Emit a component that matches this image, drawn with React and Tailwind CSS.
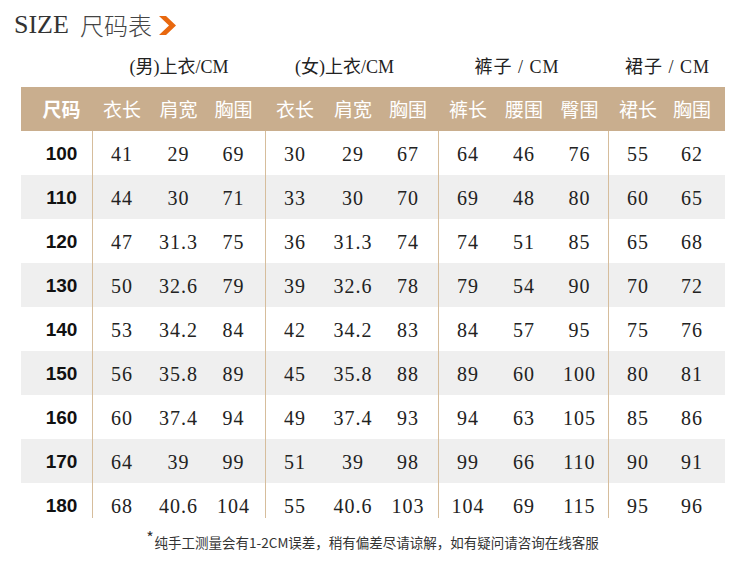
import React from 'react'

// column layout: [group, widths, extra class per cell]
const groups = [
  { cols: [{ w: 'w-[58px]' }, { w: 'w-[55px]' }, { w: 'w-[59px] pr-[4px]' }] },
  { cols: [{ w: 'w-[58px]' }, { w: 'w-[58px]' }, { w: 'w-[56px] pr-[4px]' }] },
  { cols: [{ w: 'w-[58px]' }, { w: 'w-[54px]' }, { w: 'w-[57px]' }] },
  { cols: [{ w: 'w-[58px]' }, { w: 'w-[50px]' }] },
]

const headers = [
  ['衣长', '肩宽', '胸围'],
  ['衣长', '肩宽', '胸围'],
  ['裤长', '腰围', '臀围'],
  ['裙长', '胸围'],
]

const rows = [
  ['100', ['41', '29', '69'], ['30', '29', '67'], ['64', '46', '76'], ['55', '62']],
  ['110', ['44', '30', '71'], ['33', '30', '70'], ['69', '48', '80'], ['60', '65']],
  ['120', ['47', '31.3', '75'], ['36', '31.3', '74'], ['74', '51', '85'], ['65', '68']],
  ['130', ['50', '32.6', '79'], ['39', '32.6', '78'], ['79', '54', '90'], ['70', '72']],
  ['140', ['53', '34.2', '84'], ['42', '34.2', '83'], ['84', '57', '95'], ['75', '76']],
  ['150', ['56', '35.8', '89'], ['45', '35.8', '88'], ['89', '60', '100'], ['80', '81']],
  ['160', ['60', '37.4', '94'], ['49', '37.4', '93'], ['94', '63', '105'], ['85', '86']],
  ['170', ['64', '39', '99'], ['51', '39', '98'], ['99', '66', '110'], ['90', '91']],
  ['180', ['68', '40.6', '104'], ['55', '40.6', '103'], ['104', '69', '115'], ['95', '96']],
]

const serif = "font-['Liberation_Serif','Noto_Sans_CJK_SC',serif]"
const cjk = "font-['Noto_Sans_CJK_SC','Liberation_Sans',sans-serif]"

function Chevron() {
  return (
    <svg width="19" height="19" viewBox="0 0 19 19" className="ml-[6px] mt-[1px]">
      <polygon points="1,0 8,0 18,9.5 8,19 1,19 11,9.5" fill="#e8680f" />
    </svg>
  )
}

export default function App() {
  return (
    <div className="w-[750px] h-[561px] bg-white overflow-hidden">
      {/* title */}
      <div className="h-[48px] flex items-center pl-[14px] pt-[1px]">
        <span className={`${serif} text-[26px] text-[#333] leading-none`}>SIZE</span>
        <span className={`${cjk} text-[24px] text-[#444] leading-none ml-[11px] font-light`}>尺码表</span>
        <Chevron />
      </div>

      {/* group labels */}
      <div className={`${serif} h-[39px] flex items-center pl-[93px] text-[18px] text-[#222]`}>
        <div className="w-[172px] text-center">(男)上衣/CM</div>
        <div className="w-[173px] text-center pr-[16px] ml-px">(女)上衣/CM</div>
        <div className="w-[170px] text-center pr-[14px] tracking-[1px]">裤子 / CM</div>
        <div className="w-[117px] text-center tracking-[1px]">裙子 / CM</div>
      </div>

      <div className="ml-[21px] w-[704px]">
        {/* header band */}
        <div className={`${cjk} h-[44px] flex bg-[#c9ae8e] text-white text-[19px]`}>
          <div className="w-[71px] pl-[10px] flex items-center justify-center font-bold">尺码</div>
          {groups.map((g, gi) => (
            <React.Fragment key={gi}>
              <div className="w-px" />
              {g.cols.map((c, ci) => (
                <div key={ci} className={`${c.w} flex items-center justify-center`}>
                  {headers[gi][ci]}
                </div>
              ))}
            </React.Fragment>
          ))}
        </div>

        {rows.map((r, ri) => {
          const last = ri === rows.length - 1
          return (
            <div key={ri} className={`h-[44px] flex ${ri % 2 === 1 ? 'bg-[#efefef]' : 'bg-white'}`}>
              <div className="w-[71px] pl-[10px] pt-[2px] flex items-center justify-center font-['Liberation_Sans',sans-serif] font-bold text-[19px] text-[#111]">
                {r[0]}
              </div>
              {groups.map((g, gi) => (
                <React.Fragment key={gi}>
                  <div className={`w-px bg-[#d6bd9c] ${last ? 'mb-[9px]' : ''}`} />
                  {g.cols.map((c, ci) => (
                    <div
                      key={ci}
                      className={`${c.w} ${serif} pt-[2px] flex items-center justify-center text-[20px] tracking-[1px] text-[#222]`}
                    >
                      {r[gi + 1][ci]}
                    </div>
                  ))}
                </React.Fragment>
              ))}
            </div>
          )
        })}
      </div>

      {/* footnote */}
      <div className={`${cjk} h-[30px] flex items-center justify-center pr-[5px] text-[13.5px] text-[#333]`}>
        <span className="text-[16px] self-start mt-[2px] mr-[1px] leading-none">*</span>
        纯手工测量会有1-2CM误差，稍有偏差尽请谅解，如有疑问请咨询在线客服
      </div>
    </div>
  )
}
